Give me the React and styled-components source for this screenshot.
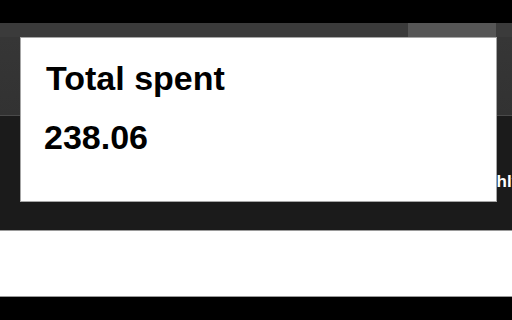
import React from "react";
import styled, { createGlobalStyle } from "styled-components";

const Global = createGlobalStyle`
  html, body {
    margin: 0;
    padding: 0;
    width: 512px;
    height: 320px;
    overflow: hidden;
    background: #000000;
    font-family: "Liberation Sans", Arial, sans-serif;
  }
`;

const Page = styled.div`
  position: relative;
  width: 512px;
  height: 320px;
  display: flex;
  flex-direction: column;
  overflow: hidden;
`;

const TitleBar = styled.div`
  height: 23px;
  flex-shrink: 0;
  background: #000000;
`;

const TabStrip = styled.div`
  height: 14px;
  flex-shrink: 0;
  display: flex;
  background: #3b3b3b;
`;

const Tab = styled.div`
  width: ${(p) => p.w}px;
  background: ${(p) => (p.active ? "#565656" : "transparent")};
`;

const Header = styled.div`
  height: 78px;
  flex-shrink: 0;
  background: linear-gradient(#363636, #323232);
  border-bottom: 1px solid #4a4a4a;
`;

const Body = styled.div`
  height: 115px;
  flex-shrink: 0;
  background: #1b1b1b;
  display: flex;
  align-items: flex-start;
  padding-left: 456px;
  padding-top: 56px;
  box-sizing: border-box;
  white-space: nowrap;
  border-bottom: 1px solid #9a9a9a;
`;

const Label = styled.span`
  color: #ffffff;
  font-size: 17px;
  font-weight: 700;
  line-height: 20px;
`;

const Footer = styled.div`
  height: 65px;
  flex-shrink: 0;
  background: #ffffff;
  border-bottom: 1px solid #9a9a9a;
`;

const Tooltip = styled.div`
  position: absolute;
  left: 20px;
  top: 37px;
  width: 477px;
  height: 165px;
  background: #ffffff;
  border: 1px solid #a6a6a6;
  padding: 20px 0 0 23px;
  box-sizing: border-box;
  color: #000000;
`;

const TipTitle = styled.div`
  font-size: 34px;
  font-weight: 700;
  line-height: 40px;
  margin-left: 2px;
`;

const TipValue = styled.div`
  font-size: 34px;
  font-weight: 700;
  line-height: 40px;
  margin-top: 19px;
`;

export default function App() {
  return (
    <>
      <Global />
      <Page>
        <TitleBar />
        <TabStrip>
          <Tab w={408} />
          <Tab w={88} active />
          <Tab w={16} />
        </TabStrip>
        <Header />
        <Body>
          <Label>Monthly</Label>
        </Body>
        <Footer />
        <Tooltip>
          <TipTitle>Total spent</TipTitle>
          <TipValue>238.06</TipValue>
        </Tooltip>
      </Page>
    </>
  );
}
